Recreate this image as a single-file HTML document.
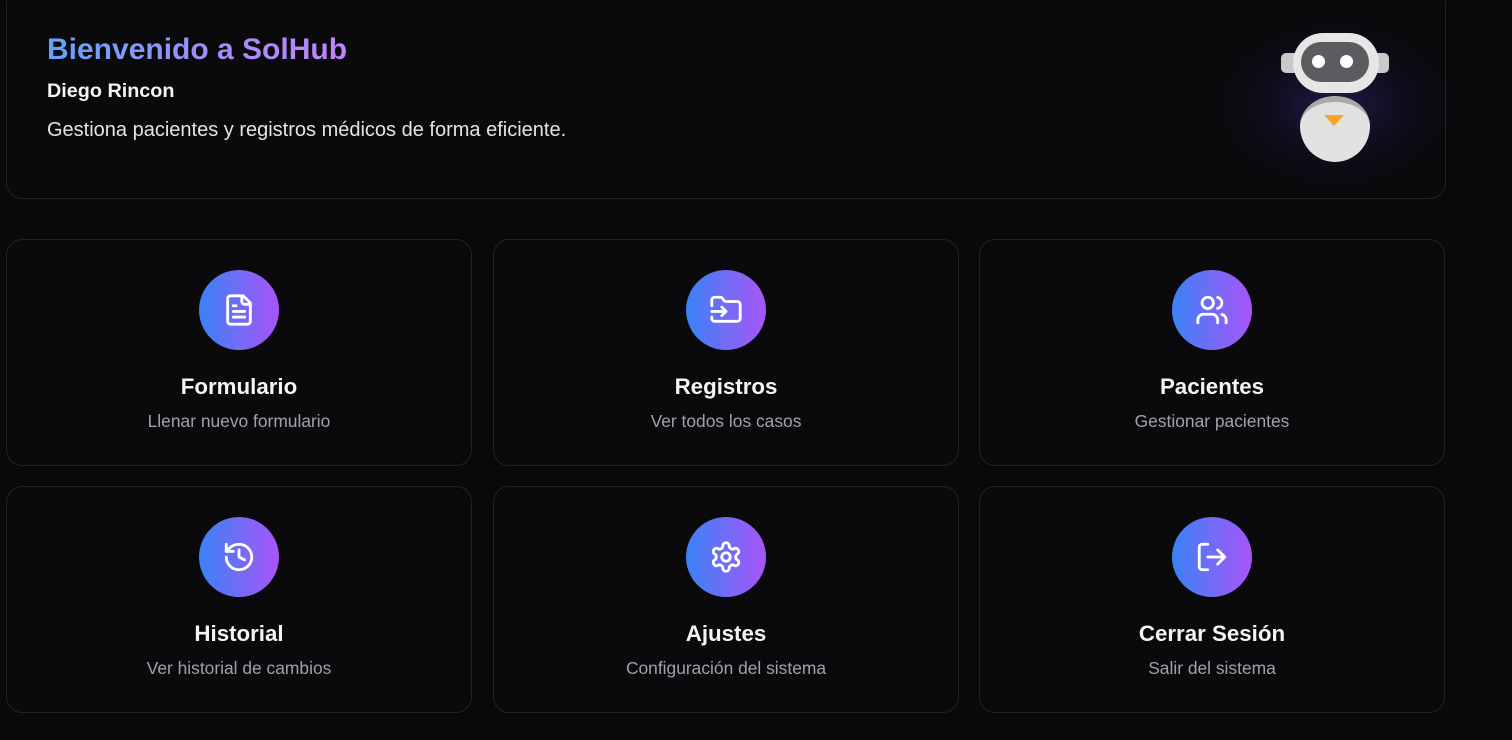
<!DOCTYPE html>
<html><head><meta charset="utf-8"><style>
*{margin:0;padding:0;box-sizing:border-box}
body{width:1512px;height:740px;background:#09090b;font-family:"Liberation Sans",sans-serif;position:relative;overflow:hidden;color:#fff}
.box{position:absolute;border:1px solid #222226;border-radius:16px;background:#0a0a0c}
.hdr{left:6px;top:-12px;width:1440px;height:211px}
h1{position:absolute;left:47px;top:33px;font-size:30px;font-weight:bold;background:linear-gradient(90deg,#60a5fa,#a78bfa 60%,#c084fc);-webkit-background-clip:text;background-clip:text;color:transparent;line-height:34px}
.name{position:absolute;left:47px;top:80px;font-size:19.8px;font-weight:bold;color:#f4f4f5}
.desc{position:absolute;left:47px;top:119px;font-size:20px;color:#e4e4e7}
.glow{position:absolute;left:1215px;top:20px;width:240px;height:170px;border-radius:50%;background:radial-gradient(closest-side,rgba(60,40,140,.45),rgba(30,20,80,.2) 60%,rgba(0,0,0,0))}
.card{width:466px;height:227px;text-align:center}
.ic{position:absolute;left:50%;top:30px;margin-left:-40px;width:80px;height:80px;border-radius:50%;background:linear-gradient(90deg,#3b82f6,#a855f7);display:flex;align-items:center;justify-content:center}
.t{position:absolute;left:0;right:0;top:134px;font-size:22.3px;font-weight:bold;color:#f4f4f5}
.s{position:absolute;left:0;right:0;top:171px;font-size:17.4px;color:#a1a1aa}
svg{width:34px;height:34px;fill:none;stroke:#fff;stroke-width:2;stroke-linecap:round;stroke-linejoin:round}
</style></head><body>
<div class="box hdr"></div>
<div class="glow"></div>
<h1>Bienvenido a SolHub</h1>
<div class="name">Diego Rincon</div>
<div class="desc">Gestiona pacientes y registros médicos de forma eficiente.</div>
<div style="position:absolute;left:1281px;top:53px;width:108px;height:20px;background:#c9c9c9;border-radius:5px"></div>
<div style="position:absolute;left:1293px;top:33px;width:86px;height:60px;background:#e6e6e6;border-radius:30px"></div>
<div style="position:absolute;left:1301px;top:42px;width:68px;height:40px;background:#5b5b60;border-radius:20px"></div>
<div style="position:absolute;left:1312px;top:55px;width:13px;height:13px;background:#fff;border-radius:50%"></div>
<div style="position:absolute;left:1340px;top:55px;width:13px;height:13px;background:#fff;border-radius:50%"></div>
<div style="position:absolute;left:1300px;top:96px;width:70px;height:66px;background:#e2e2e2;border-radius:35px 35px 35px 35px/30px 30px 36px 36px;border-top:6px solid #a9a9a9"></div>
<div style="position:absolute;left:1324px;top:115px;width:0;height:0;border-left:10px solid transparent;border-right:10px solid transparent;border-top:11px solid #f5a623"></div>

<div class="box card" style="left:6px;top:239px"><div class="ic"><svg viewBox="0 0 24 24"><path d="M15 2H6a2 2 0 0 0-2 2v16a2 2 0 0 0 2 2h12a2 2 0 0 0 2-2V7Z"/><path d="M14 2v4a2 2 0 0 0 2 2h4"/><path d="M10 9H8M16 13H8M16 17H8"/></svg></div><div class="t">Formulario</div><div class="s">Llenar nuevo formulario</div></div>
<div class="box card" style="left:493px;top:239px"><div class="ic"><svg viewBox="0 0 24 24"><path d="M2 9V5a2 2 0 0 1 2-2h3.9a2 2 0 0 1 1.69.9l.81 1.2a2 2 0 0 0 1.67.9H20a2 2 0 0 1 2 2v10a2 2 0 0 1-2 2H4a2 2 0 0 1-2-2v-1"/><path d="M2 13h10M9 16l3-3-3-3"/></svg></div><div class="t">Registros</div><div class="s">Ver todos los casos</div></div>
<div class="box card" style="left:979px;top:239px"><div class="ic"><svg viewBox="0 0 24 24"><path d="M16 21v-2a4 4 0 0 0-4-4H6a4 4 0 0 0-4 4v2"/><circle cx="9" cy="7" r="4"/><path d="M22 21v-2a4 4 0 0 0-3-3.87M16 3.13a4 4 0 0 1 0 7.75"/></svg></div><div class="t">Pacientes</div><div class="s">Gestionar pacientes</div></div>
<div class="box card" style="left:6px;top:486px"><div class="ic"><svg viewBox="0 0 24 24"><path d="M3 12a9 9 0 1 0 9-9 9.75 9.75 0 0 0-6.74 2.74L3 8"/><path d="M3 3v5h5M12 7v5l4 2"/></svg></div><div class="t">Historial</div><div class="s">Ver historial de cambios</div></div>
<div class="box card" style="left:493px;top:486px"><div class="ic"><svg viewBox="0 0 24 24"><path d="M12.22 2h-.44a2 2 0 0 0-2 2v.18a2 2 0 0 1-1 1.73l-.43.25a2 2 0 0 1-2 0l-.15-.08a2 2 0 0 0-2.73.73l-.22.38a2 2 0 0 0 .73 2.73l.15.1a2 2 0 0 1 1 1.72v.51a2 2 0 0 1-1 1.74l-.15.09a2 2 0 0 0-.73 2.73l.22.38a2 2 0 0 0 2.73.73l.15-.08a2 2 0 0 1 2 0l.43.25a2 2 0 0 1 1 1.73V20a2 2 0 0 0 2 2h.44a2 2 0 0 0 2-2v-.18a2 2 0 0 1 1-1.73l.43-.25a2 2 0 0 1 2 0l.15.08a2 2 0 0 0 2.73-.73l.22-.39a2 2 0 0 0-.73-2.73l-.15-.08a2 2 0 0 1-1-1.74v-.5a2 2 0 0 1 1-1.74l.15-.09a2 2 0 0 0 .73-2.73l-.22-.38a2 2 0 0 0-2.73-.73l-.15.08a2 2 0 0 1-2 0l-.43-.25a2 2 0 0 1-1-1.73V4a2 2 0 0 0-2-2z"/><circle cx="12" cy="12" r="3"/></svg></div><div class="t">Ajustes</div><div class="s">Configuración del sistema</div></div>
<div class="box card" style="left:979px;top:486px"><div class="ic"><svg viewBox="0 0 24 24"><path d="M9 21H5a2 2 0 0 1-2-2V5a2 2 0 0 1 2-2h4"/><path d="M16 17l5-5-5-5M21 12H9"/></svg></div><div class="t">Cerrar Sesión</div><div class="s">Salir del sistema</div></div>
</body></html>
